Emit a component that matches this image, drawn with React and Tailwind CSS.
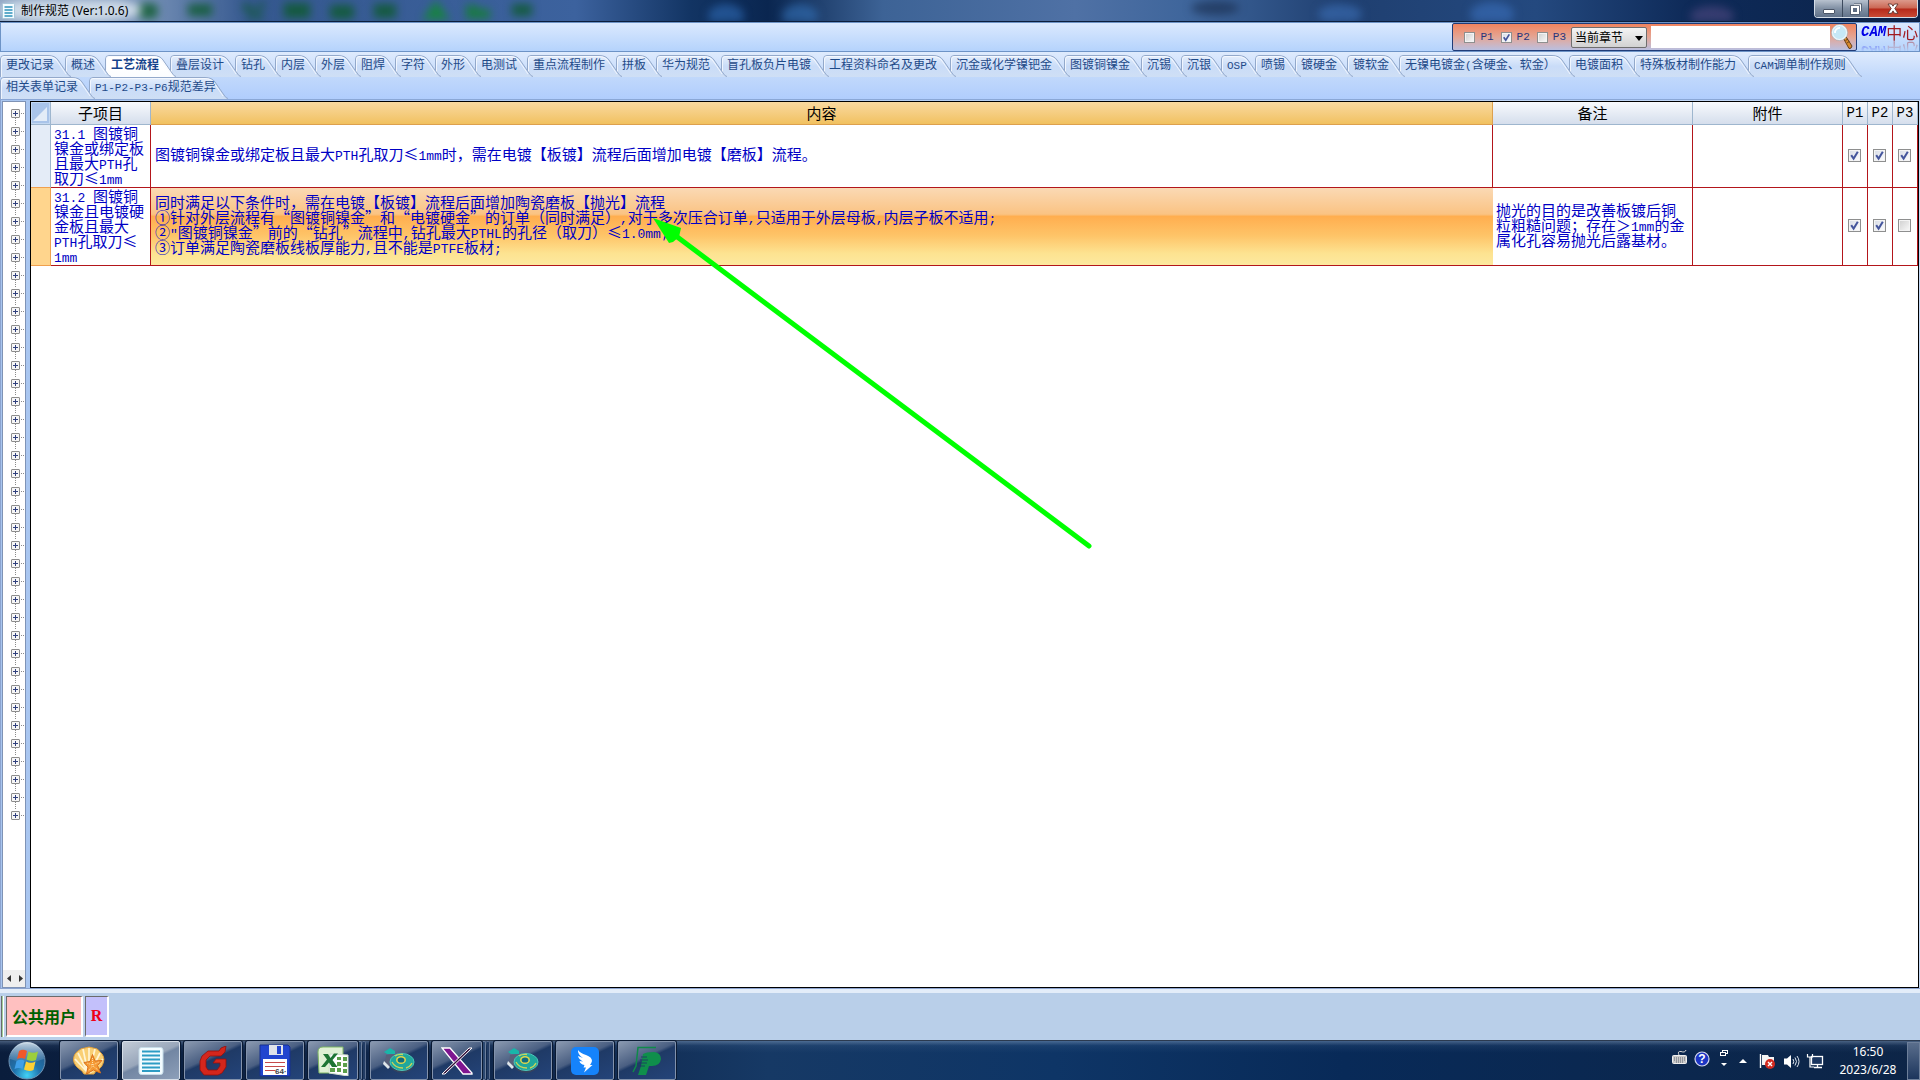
import React, { useState } from "react";

const tabRows = [
  [
    "更改记录",
    "概述",
    "工艺流程",
    "叠层设计",
    "钻孔",
    "内层",
    "外层",
    "阻焊",
    "字符",
    "外形",
    "电测试",
    "重点流程制作",
    "拼板",
    "华为规范",
    "盲孔板负片电镀",
    "工程资料命名及更改",
    "沉金或化学镍钯金",
    "图镀铜镍金",
    "沉锡",
    "沉银",
    "OSP",
    "喷锡",
    "镀硬金",
    "镀软金",
    "无镍电镀金(含硬金、软金）",
    "电镀面积",
    "特殊板材制作能力",
    "CAM调单制作规则",
  ],
  ["相关表单记录", "P1-P2-P3-P6规范差异"],
];

const rows = [
  {
    id: "31.1",
    title: ["31.1 图镀铜", "镍金或绑定板", "且最大PTH孔", "取刀≤1mm"],
    content: [
      "图镀铜镍金或绑定板且最大PTH孔取刀≤1mm时，需在电镀【板镀】流程后面增加电镀【磨板】流程。",
    ],
    remark: [],
    checks: [true, true, true],
    selected: false,
  },
  {
    id: "31.2",
    title: ["31.2 图镀铜", "镍金且电镀硬", "金板且最大", "PTH孔取刀≤", "1mm"],
    content: [
      "同时满足以下条件时，需在电镀【板镀】流程后面增加陶瓷磨板【抛光】流程",
      "①针对外层流程有“图镀铜镍金”和“电镀硬金”的订单（同时满足）,对于多次压合订单,只适用于外层母板,内层子板不适用;",
      '②"图镀铜镍金”前的“钻孔”流程中,钻孔最大PTHL的孔径（取刀）≤1.0mm;',
      "③订单满足陶瓷磨板线板厚能力,且不能是PTFE板材;",
    ],
    remark: ["抛光的目的是改善板镀后铜", "粒粗糙问题；存在＞1mm的金", "属化孔容易抛光后露基材。"],
    checks: [true, true, false],
    selected: true,
  },
];

const treeNodes = Array.from({ length: 40 }, (_, i) => i);

// Half-width characters are set in a monospaced face, the rest in the CJK face
const Mixed = ({ text, latin = "text-[13px]" }) =>
  text.split(/([\x20-\x7e]+)/).map((part, i) =>
    i % 2 === 1 ? (
      <span
        key={i}
        className={`font-['Liberation_Mono',monospace] whitespace-pre ${latin}`}
      >
        {part}
      </span>
    ) : (
      part
    )
  );

const Lines = ({ lines }) =>
  lines.map((line, i) => (
    <div key={i} className="h-[15px] whitespace-nowrap">
      <Mixed text={line} />
    </div>
  ));

const tabWidth = (label) => {
  const wide = (label.match(/[^\x20-\x7e]/g) || []).length;
  const units = wide * 2 + (label.length - wide);
  return Math.round(15 + units * 6.2);
};

const Tab = ({ label, active, order, onSelect }) => {
  const w = tabWidth(label);
  return (
    <button
      type="button"
      role="tab"
      aria-selected={active}
      onClick={onSelect}
      className={`relative h-[22px] shrink-0 pb-[4px] pl-[6px] text-left text-[12px] leading-[18px] whitespace-nowrap ${
        active ? "font-bold text-[#15428b]" : "text-[#1f4a88]"
      }`}
      style={{ width: w, zIndex: order }}
    >
      <svg
        className="absolute top-0 left-0"
        width={w + 8}
        height="22"
        aria-hidden="true"
      >
        <defs>
          <linearGradient id={`tab-${order}-${w}`} x1="0" y1="0" x2="0" y2="1">
            <stop offset="0" stopColor={active ? "#ffffff" : "#e6effc"} />
            <stop offset="0.5" stopColor={active ? "#ffffff" : "#c9dcf8"} />
            <stop offset="1" stopColor={active ? "#fbfdff" : "#cfdff5"} />
          </linearGradient>
        </defs>
        <path
          d={`M0.5 22 V4 Q0.5 0.5 4 0.5 H${w - 17} Q${w - 10} 0.5 ${w - 7} 5 L${
            w + 2
          } 18 Q${w + 4} 21.5 ${w + 6} 21.5 V22 Z`}
          fill={`url(#tab-${order}-${w})`}
        />
        <path
          d={`M0.5 22 V4 Q0.5 0.5 4 0.5 H${w - 17} Q${w - 10} 0.5 ${w - 7} 5 L${
            w + 2
          } 18 Q${w + 4} 21.5 ${w + 6} 21.5`}
          fill="none"
          stroke="#93a9cb"
        />
        <path
          d={`M1.5 22 V4 Q1.5 1.5 4 1.5 H${w - 17} Q${w - 11} 1.5 ${w - 8} 6 L${
            w + 1
          } 19`}
          fill="none"
          stroke="#f7faff"
          strokeOpacity="0.8"
        />
      </svg>
      <span className="relative">
        <Mixed text={label} latin="text-[11px]" />
      </span>
    </button>
  );
};

const CheckBox = ({ id, label, checked, onChange, size = "size-[13px]" }) => (
  <span className={`relative inline-block align-top ${size}`}>
    <input
      id={id}
      type="checkbox"
      aria-label={label}
      checked={checked}
      onChange={onChange}
      className={`block appearance-none border border-[#8e8f8f] bg-linear-to-br from-[#cfcfcf] to-[#fafafa] shadow-[inset_0_0_0_1px_#f4f4f4] checked:bg-[linear-gradient(135deg,#d5dae4,#ffffff)] ${size}`}
    />
    {checked && (
      <svg
        className={`pointer-events-none absolute inset-0 ${size}`}
        viewBox="0 0 13 13"
      >
        <path
          d="M3.2 6.2 L5.6 9.6 L9.8 2.8"
          fill="none"
          stroke="#44559c"
          strokeWidth="2"
        />
      </svg>
    )}
  </span>
);

const TitleBar = () => (
  <header className="relative flex h-[22px] items-start overflow-hidden border-b border-[#0c1e3c] bg-[linear-gradient(90deg,#8fa6c4_0%,#7d97bb_7%,#35588f_13%,#3c629e_30%,#123463_36%,#0a2650_40%,#3d6396_46%,#4f71a5_56%,#3e659b_62%,#1f3f70_70%,#24497f_80%,#0e2a58_88%,#0b234a_100%)]">
    {/* windows behind the translucent frame */}
    <div className="absolute inset-0 blur-[4px]" aria-hidden="true">
      <svg width="100%" height="22">
        <g fill="#0c5a2c" fillOpacity="0.8">
          <rect x="138" y="3" width="20" height="16" rx="6" />
          <rect x="188" y="4" width="24" height="12" />
          <path d="M246 3 l18 14 l-5 3 l-18 -13 z M262 2 l-16 18 l5 0 l15 -16z" />
          <rect x="284" y="3" width="26" height="15" />
          <rect x="330" y="5" width="24" height="14" rx="4" />
          <rect x="374" y="4" width="22" height="14" />
          <path d="M422 20 l14 -20 l14 20 z" fill="#108a30" />
          <path d="M466 5 h10 l4 4 h10 v10 h-24 z" fill="#12802f" />
          <rect x="512" y="4" width="20" height="12" />
        </g>
        <g fillOpacity="0.6">
          <ellipse cx="726" cy="16" rx="18" ry="12" fill="#2f6bb5" />
          <ellipse cx="800" cy="16" rx="18" ry="12" fill="#3472b8" />
          <ellipse cx="1215" cy="8" rx="24" ry="7" fill="#17294a" />
          <ellipse cx="1340" cy="14" rx="22" ry="10" fill="#3c70b8" />
          <ellipse cx="1492" cy="14" rx="22" ry="12" fill="#3a70bd" />
          <ellipse cx="1712" cy="16" rx="22" ry="10" fill="#524a82" />
        </g>
        <ellipse cx="70" cy="10" rx="72" ry="13" fill="#dfe8f1" fillOpacity="0.8" />
      </svg>
    </div>
    <div className="relative flex h-[21px] items-center gap-[6px] pl-[2px]">
      <svg width="13" height="16" viewBox="0 0 13 16" aria-hidden="true">
        <rect x="0.5" y="0.5" width="12" height="15" rx="1" fill="#f4fbff" stroke="#a9c6d8" />
        <path d="M2.5 4h8M2.5 7h8M2.5 10h8M2.5 13h8" stroke="#2f93bb" strokeWidth="1.4" />
      </svg>
      <h1 className="text-[12px] leading-[20px] text-black font-['Noto_Sans','Noto_Sans_CJK_SC',sans-serif]">
        制作规范 (Ver:1.0.6)
      </h1>
    </div>
    <div className="relative mr-[2px] ml-auto flex h-[18px] overflow-hidden rounded-b-[4px] border border-t-0 border-[#d4dde8]">
      <button
        type="button"
        aria-label="最小化"
        className="flex w-[28px] items-center justify-center border-r border-[#3c4a5e] bg-linear-to-b from-[#b8c2cf] via-[#8190a4] via-50% to-[#62738b]"
      >
        <svg width="12" height="14" viewBox="0 0 12 14">
          <rect x="0.5" y="7.5" width="11" height="4" rx="0.5" fill="#fff" stroke="#4b5668" />
        </svg>
      </button>
      <button
        type="button"
        aria-label="还原"
        className="flex w-[26px] items-center justify-center border-r border-[#3c4a5e] bg-linear-to-b from-[#b8c2cf] via-[#8190a4] via-50% to-[#62738b]"
      >
        <svg width="14" height="14" viewBox="0 0 14 14">
          <path d="M5 3.2h6.2v6" fill="none" stroke="#4b5668" strokeWidth="3.4" />
          <path d="M5 3.2h6.2v6" fill="none" stroke="#fff" strokeWidth="1.7" />
          <rect x="3" y="5" width="6" height="6" fill="#8190a4" stroke="#4b5668" strokeWidth="3.6" />
          <rect x="3" y="5" width="6" height="6" fill="#5d6c82" stroke="#fff" strokeWidth="2" />
        </svg>
      </button>
      <button
        type="button"
        aria-label="关闭"
        className="flex w-[48px] items-center justify-center bg-[linear-gradient(180deg,#dc9a8c_0%,#cb6653_48%,#b5291a_52%,#c94a35_100%)]"
      >
        <svg width="14" height="12" viewBox="0 0 14 12">
          <path
            d="M2 1h3.5L7 3.2 8.500 1h3.500L8.800 5.500l3.200 4.800H8.500L7 7.900l-1.500 2.400H2l3.200-4.800z"
            fill="#fff"
            stroke="#5d3530"
            strokeWidth="0.9"
          />
        </svg>
      </button>
    </div>
  </header>
);

const SearchBar = () => {
  const [parts, setParts] = useState({ P1: false, P2: true, P3: false });

  return (
    <div className="flex h-[30px] items-stretch border border-[#6d93c6] bg-linear-to-b from-[#dbe9fe] to-[#b5d3fc]">
      <form
        className="ml-auto flex items-center rounded-[2px] border border-[#1f3c78] bg-linear-to-b from-[#f0835d] via-[#e4a594] to-[#b9bfe0] pr-[3px] pl-[11px]"
        onSubmit={(e) => e.preventDefault()}
      >
        {Object.keys(parts).map((name) => (
          <div key={name} className="mr-[7px] flex items-center gap-[5px]">
            <CheckBox
              id={`part-${name}`}
              size="size-[11px]"
              checked={parts[name]}
              onChange={() => setParts({ ...parts, [name]: !parts[name] })}
            />
            <label
              htmlFor={`part-${name}`}
              className="text-[11px] leading-[14px] text-[#27357c] font-['Liberation_Mono',monospace]"
            >
              {name}
            </label>
          </div>
        ))}
        <div className="relative ml-[-2px]">
          <select
            aria-label="范围"
            className="block h-[21px] w-[76px] appearance-none rounded-[2px] border border-[#6f6f6f] bg-linear-to-b from-[#f4f4f4] to-[#d2d2d2] pl-[3px] text-[12px] leading-[18px] text-black"
          >
            <option>当前章节</option>
            <option>全部章节</option>
          </select>
          <svg
            className="pointer-events-none absolute top-[9px] right-[4px]"
            width="8"
            height="5"
          >
            <path d="M0 0h8L4 5z" fill="#000" />
          </svg>
        </div>
        <input
          type="text"
          aria-label="搜索"
          className="ml-[4px] h-[22px] w-[179px] bg-white px-1 text-[12px] outline-none"
        />
        <button type="submit" aria-label="查找" className="ml-[1px]">
          <svg width="22" height="26" viewBox="0 0 22 26">
            <path d="M12.500 14.500 L15 12.800 L21 22 Q20.500 25 18 24.500 Z" fill="#d88a2e" stroke="#5b3513" strokeWidth="0.900" />
            <path d="M14.500 16.500l2.500-1.500M16 19l2.500-1.700" stroke="#5b3513" strokeWidth="0.800" />
            <circle cx="8.500" cy="8.500" r="7.300" fill="#c6e8f6" stroke="#eef6fa" strokeWidth="1.600" />
            <circle cx="8.500" cy="8.500" r="8.100" fill="none" stroke="#8ea3ad" strokeWidth="0.500" />
            <path d="M4 9a4.500 4.500 0 0 1 5-5" fill="none" stroke="#fff" strokeWidth="1.800" />
          </svg>
        </button>
      </form>
      <div className="w-[62px] pl-[4px] text-[16px] leading-[18px] whitespace-nowrap">
        <div className="flex h-[18px] items-center [-webkit-box-reflect:below_0_linear-gradient(transparent_40%,rgba(0,0,0,0.45))]">
          <span className="text-[14px] font-bold text-[#0000e6] italic font-['Liberation_Mono',monospace]">
            CAM
          </span>
          <span className="text-[#a01a20]">中心</span>
        </div>
      </div>
    </div>
  );
};

const Tree = () => (
  <aside className="mr-[4px] flex w-[24px] shrink-0 flex-col border border-[#7f93b5] bg-white">
    <ul className="flex-1 pt-[2px]">
      {treeNodes.map((n) => (
        <li key={n} className="h-[18px] pl-[7px]">
          <button type="button" aria-label={`展开 ${n + 1}`} className="block">
            <svg width="14" height="18" viewBox="0 0 14 18">
              <path
                d={
                  n === 0
                    ? "M5.500 14V18"
                    : n === treeNodes.length - 1
                    ? "M5.500 0V4"
                    : "M5.500 0V4M5.500 14V18"
                }
                stroke="#8a8a8a"
                strokeDasharray="1 1"
              />
              <path d="M11 9.500H14" stroke="#8a8a8a" strokeDasharray="1 1" />
              <rect x="1.500" y="5.500" width="8" height="8" rx="0.500" fill="#f6f6f6" stroke="#8c8c8c" />
              <path d="M3 9.500H8M5.500 7V12" stroke="#2f3f7d" />
            </svg>
          </button>
        </li>
      ))}
    </ul>
    <div className="flex h-[17px] items-center justify-between bg-[#efefef] pr-[2px] pl-[4px]">
      <button type="button" aria-label="向左">
        <svg width="4" height="7" className="block">
          <path d="M4 0v7L0 3.500z" fill="#333" />
        </svg>
      </button>
      <button type="button" aria-label="向右">
        <svg width="4" height="7" className="block">
          <path d="M0 0v7L4 3.500z" fill="#333" />
        </svg>
      </button>
    </div>
  </aside>
);

const headCell =
  "h-[23px] border-r border-b border-[#9eb6ce] bg-linear-to-b from-[#f8fafd] to-[#d5deec] p-0 pb-[2px] text-center font-normal";
const bodyCell = "border-r border-b border-[#b3161b] pt-0 pr-0";

const SpecTable = () => {
  const [checks, setChecks] = useState(rows.map((r) => r.checks));

  const toggle = (row, col) =>
    setChecks(
      checks.map((list, i) =>
        i === row ? list.map((v, j) => (j === col ? !v : v)) : list
      )
    );

  return (
    <main className="relative mr-[1px] min-w-0 flex-1 border border-black bg-white">
      <table className="w-full table-fixed border-separate border-spacing-0 text-[15px] leading-[15px]">
        <colgroup>
          <col className="w-[20px]" />
          <col className="w-[100px]" />
          <col />
          <col className="w-[200px]" />
          <col className="w-[150px]" />
          <col className="w-[25px]" />
          <col className="w-[25px]" />
          <col className="w-[25px]" />
        </colgroup>
        <thead>
          <tr>
            <th className="border-r border-b border-[#9eb6ce] bg-[#a9c4e9] p-0">
              <svg width="19" height="22" viewBox="0 0 19 22" className="block">
                <rect x="0.500" y="0.500" width="18" height="21" fill="none" stroke="#c3d8f2" />
                <path d="M16 5V19H2Z" fill="#e3ecf7" />
              </svg>
            </th>
            <th className={headCell}>子项目</th>
            <th className="border-r border-b border-[#dda04e] bg-linear-to-b from-[#f9d99f] to-[#f1c15f] p-0 pb-[2px] text-center font-normal">
              内容
            </th>
            <th className={headCell}>备注</th>
            <th className={headCell}>附件</th>
            {["P1", "P2", "P3"].map((p) => (
              <th key={p} className={headCell}>
                <Mixed text={p} latin="text-[14px]" />
              </th>
            ))}
          </tr>
        </thead>
        <tbody className="text-[#0000c4]">
          {rows.map((row, i) => (
            <tr key={row.id}>
              <td
                className={
                  row.selected
                    ? "border-r border-b border-[#f0a04e] bg-[#ffd58d]"
                    : "border-r border-b border-r-[#9eb6ce] border-b-[#f0a04e] bg-[#e4ecf7]"
                }
              />
              <td className={`${bodyCell} pb-[2px] pl-[3px]`}>
                <Lines lines={row.title} />
              </td>
              <td
                className={
                  row.selected
                    ? "border-b border-[#b3161b] bg-[linear-gradient(180deg,#fad9b4_0%,#fac383_34%,#ffae4f_37%,#fec468_62%,#fde391_85%,#fde99f_100%)] pt-0 pb-[5px] pl-[4px]"
                    : `${bodyCell} pb-[5px] pl-[4px]`
                }
              >
                <Lines lines={row.content} />
              </td>
              <td className={`${bodyCell} pb-[5px] pl-[3px]`}>
                <Lines lines={row.remark} />
              </td>
              <td className={bodyCell} />
              {checks[i].map((checked, j) => (
                <td key={j} className={`${bodyCell} pr-[1px] pl-0 text-center`}>
                  <CheckBox
                    id={`check-${row.id}-${j}`}
                    label={`${row.id} P${j + 1}`}
                    checked={checked}
                    onChange={() => toggle(i, j)}
                  />
                </td>
              ))}
            </tr>
          ))}
        </tbody>
      </table>

      {/* annotation arrow lying over the grid */}
      <svg
        className="pointer-events-none absolute top-[106px] left-[613px]"
        width="460"
        height="350"
        aria-hidden="true"
      >
        <path d="M24 22 L445 338" stroke="#00ff00" strokeWidth="5" strokeLinecap="round" />
        <path d="M9 10 L37 20 L35 29 L29 34 L25 35 Z" fill="#00ff00" />
      </svg>
    </main>
  );
};

const StatusBar = () => (
  <footer className="flex h-[47px] gap-[2px] bg-[#b9cfe9] pt-[3px] pl-[1px] text-[16px] font-bold">
    <div className="h-[41px] w-[3px] border-r border-l border-r-white border-l-[#6b6b6b] bg-[#9fd09f]" />
    <div className="flex h-[41px] w-[77px] items-center justify-center border-t border-r-2 border-b-2 border-l border-t-[#6b6b6b] border-r-white border-b-white border-l-[#6b6b6b] bg-[#ffc0c0] text-[#006000]">
      公共用户
    </div>
    <div className="flex h-[41px] w-[24px] items-center justify-center border-t border-r-2 border-b-2 border-l border-t-[#6b6b6b] border-r-white border-b-white border-l-[#6b6b6b] bg-[#c3c0fb] text-[#f00018] font-['Liberation_Serif',serif]">
      R
    </div>
  </footer>
);

const ShellIcon = () => (
  <svg width="34" height="30" viewBox="0 0 34 30">
    <path
      d="M10 25 Q2 20 1.500 14 Q1.500 8 6 5 Q9 2 13 2 Q17 0 21 2 Q26 2 28 6 Q33 10 31.500 16 Q30 22 24 25 L22 28 H12 Z"
      fill="#f9cf74"
      stroke="#e0a03c"
    />
    <path
      d="M16 27 L3 13M16 27 L6 7M16 27 L11 3M17 27 L17 2M17 27 L23 3M18 27 L28 7M18 27 L31 13"
      stroke="#fff4d4"
      strokeWidth="1.700"
    />
    <path
      d="M20.500 8.500 L23 15 L30 14.500 L25.500 19.500 L28.500 27 L21.500 24 L14.500 28 L16 21 L12 16.500 L18 15.500 Z"
      fill="#f59a35"
      stroke="#d9701a"
    />
    <path d="M20.500 12v7M20.500 20l-4 5M21 20l5 4M21 19l6-3M20 19l-5-2" stroke="#ffe0a8" strokeDasharray="1 1" />
  </svg>
);

const NoteIcon = () => (
  <svg width="26" height="28" viewBox="0 0 26 28">
    <rect x="1" y="0.500" width="24" height="27" rx="2.500" fill="#f2fbff" stroke="#c4dbe8" />
    <path d="M4 4.500h18M4 8.500h18M4 12.500h18M4 16.500h18M4 20.500h18M4 24h18" stroke="#2d9cc4" strokeWidth="2" />
  </svg>
);

const GIcon = () => (
  <svg width="28" height="30" viewBox="0 0 28 30">
    <path
      d="M3 10 L9 5 H20 L22 2 L27 0 L26 6 L22 10 H11 L7 14 V21 L9 24 H18 L21 20 V17 H14 L17 13 H27 V21 L23 27 L19 29 H5 L1 24 V15 Z"
      fill="#d4261c"
      stroke="#94100c"
      strokeWidth="0.800"
    />
  </svg>
);

const FloppyIcon = () => (
  <svg width="32" height="33" viewBox="0 0 32 33">
    <path d="M1 1H29L31 3V32H1Z" fill="#2245cf" stroke="#16308f" />
    <rect x="10" y="1" width="14" height="10" fill="#dfe3ea" />
    <rect x="18" y="2" width="4" height="8" fill="#2245cf" />
    <rect x="4" y="15" width="24" height="16" fill="#fff" />
    <path d="M6 18.500h20M6 22.500h20M6 26.500h10" stroke="#c44a4a" strokeWidth="1.200" />
    <text x="16" y="30" fontSize="8" fontWeight="bold" fill="#444" fontFamily="Liberation Sans">
      64·
    </text>
  </svg>
);

const ExcelIcon = () => (
  <svg width="32" height="30" viewBox="0 0 32 30">
    <path d="M1 6 Q1 1 6 1 H26 V27 H2 Z" fill="#dff0d4" stroke="#7fb765" />
    <path d="M13 8 L31 9 V30 L12 27 Z" fill="#fff" stroke="#cfdccc" />
    <path d="M20 11h4v3h-4zM26 11h4v4h-4zM20 16h4v4h-4zM26 17h4v4h-4zM13 22h5v4h-5zM20 22h4v4h-4zM26 23h4v4h-4z" fill="#5b9f4a" />
    <path d="M6 8h5l2.500 4L17 7.500h4L15.500 14l5 7H15l-3-4.500L8 21H4l6-7.500z" fill="#1e7434" />
  </svg>
);

const DiscIcon = () => (
  <svg width="32" height="26" viewBox="0 0 32 26">
    <path d="M1 4 L7 0 L12 3 V6 L4 6 Z" fill="#19b5a9" />
    <path d="M3 7 L13 6 L16 9 L9 14 L6 19 L2 14 Z" fill="#59607a" />
    <path d="M1 13 L7 19 L5 21 L0 16Z" fill="#dfe6ea" />
    <ellipse cx="19" cy="16" rx="12" ry="9" fill="#35435e" />
    <ellipse cx="19" cy="14" rx="12" ry="8.500" fill="#20a79c" stroke="#4cc5b8" />
    <path d="M9 14 Q12 20 20 20M12 8 Q15 6 20 6.500M29 15 Q27 19 23 20" fill="none" stroke="#c9d458" strokeWidth="1.300" />
    <ellipse cx="18" cy="12" rx="5" ry="4" fill="#dfd64a" />
    <ellipse cx="18" cy="12" rx="3.400" ry="2.600" fill="#106c80" />
  </svg>
);

const XIcon = () => (
  <svg width="32" height="28" viewBox="0 0 32 28">
    <path d="M1 1H9L31 26V27H22Z" fill="#7e1590" stroke="#fff" strokeWidth="1.300" />
    <path d="M31 1H28L1 27H4Z" fill="#321038" stroke="#fff" strokeWidth="1" />
  </svg>
);

const BirdIcon = () => (
  <svg width="28" height="28" viewBox="0 0 28 28">
    <rect width="28" height="28" rx="5" fill="#1583fb" />
    <path
      d="M7 3 Q9 6 15 8 Q21 10 21 14 Q20.500 16 19 18 H21.500 L13 25.500 L15 20.500 H12.500 L13.500 18 Q9 17 8.500 14 L12 14.500 Q7.500 12 7 9 L12 11 Q6.500 7.500 7 3Z"
      fill="#fff"
    />
  </svg>
);

const PIcon = () => (
  <svg width="30" height="30" viewBox="0 0 30 30">
    <path d="M24 1.500H6L4 20 1 26" fill="none" stroke="#0f8a4a" strokeWidth="1.500" />
    <path d="M11 8 Q14 6 22 6Q29 7 29 13Q28 20 20 20H17L14 29H6L9 20 Z" fill="#0f8f4b" />
    <path d="M9 11h6M8 14h8M7 17h8M6 20h7" stroke="#1c3f60" strokeWidth="0.900" />
  </svg>
);

const taskItems = [
  { name: "贝壳", icon: ShellIcon },
  { name: "制作规范", icon: NoteIcon, active: true },
  { name: "Genesis", icon: GIcon },
  { name: "软盘", icon: FloppyIcon },
  { name: "表格", icon: ExcelIcon, stacked: true },
  { name: "光盘", icon: DiscIcon },
  { name: "终端", icon: XIcon, stacked: true },
  { name: "光盘 2", icon: DiscIcon },
  { name: "消息", icon: BirdIcon },
  { name: "P", icon: PIcon },
];

const TaskButton = ({ name, icon: Icon, active, stacked }) => (
  <div className="flex h-[39px] w-[58px]">
    <button
      type="button"
      aria-label={name}
      className={`flex min-w-0 flex-1 items-center justify-center rounded-[2px] border shadow-[0_0_0_1px_#0a1a33] ${
        active
          ? "border-[#d6dee8] bg-[linear-gradient(155deg,#c3ccd8_0%,#98a6ba_45%,#7286a3_50%,#8d9fb9_100%)]"
          : "border-[#8292ac] bg-[linear-gradient(155deg,#8a99b0_0%,#4a5f82_42%,#1f3a66_48%,#24447a_100%)]"
      }`}
    >
      <Icon />
    </button>
    {stacked && (
      <>
        <span className="ml-[1px] w-[3px] rounded-r-[2px] border border-l-0 border-[#6d7f9c] bg-[#2b4870]" />
        <span className="ml-[1px] w-[3px] rounded-r-[2px] border border-l-0 border-[#5d7090] bg-[#223c64]" />
      </>
    )}
  </div>
);

const StartOrb = () => (
  <button type="button" aria-label="开始" className="mr-[13px] ml-[7px]">
    <svg width="40" height="40" viewBox="0 0 40 40" className="block">
      <defs>
        <radialGradient id="orb" cx="0.5" cy="0.9" r="0.9">
          <stop offset="0" stopColor="#42d2f5" />
          <stop offset="0.4" stopColor="#1f74ae" />
          <stop offset="1" stopColor="#27507e" />
        </radialGradient>
        <linearGradient id="gloss" x1="0" y1="0" x2="0" y2="1">
          <stop offset="0" stopColor="#e6f1f8" stopOpacity="0.85" />
          <stop offset="1" stopColor="#9cc0da" stopOpacity="0.15" />
        </linearGradient>
      </defs>
      <circle cx="20" cy="20" r="18" fill="url(#orb)" stroke="#6f93b4" />
      <path d="M3 18A17 17 0 0 1 37 18Q20 25 3 18Z" fill="url(#gloss)" />
      <path d="M12 10Q16 7.500 20 10L18 18Q14 16 10 18Z" fill="#f0592a" />
      <path d="M21.500 10.500Q26 13 31 10.500L29 19Q24 21 19.500 18.500Z" fill="#9ccf3c" />
      <path d="M9.500 20Q14 17.500 17.500 19.700L15.500 28Q12 26 7.500 28Z" fill="#3f9fe8" />
      <path d="M19 20.500Q24 23 28.500 20.500L26.500 29Q22 31 17 28.500Z" fill="#fcd035" />
    </svg>
  </button>
);

const Tray = () => (
  <div className="ml-auto flex h-[40px] items-center text-white">
    <svg width="155" height="40" viewBox="0 0 155 40" aria-hidden="true">
      {/* keyboard */}
      <path d="M8 14 Q6 10 10 10.500 Q14 12 15 9" fill="none" stroke="#d6d6d6" />
      <rect x="1.500" y="14.500" width="14" height="8" rx="1" fill="#c9c9c9" stroke="#efefef" />
      <path d="M3 17h11M3 19h11M5 21h7" stroke="#5b6270" strokeDasharray="1 1" />
      {/* help */}
      <circle cx="31" cy="18" r="7" fill="#1c35c4" stroke="#d5d9ee" strokeWidth="1.200" />
      <text x="31" y="22" fontSize="12" fontWeight="bold" textAnchor="middle" fill="#fff" fontFamily="Liberation Sans">
        ?
      </text>
      {/* restore and menu carets */}
      <rect x="51.500" y="9.500" width="5" height="3" fill="none" stroke="#fff" />
      <rect x="49.500" y="11.500" width="5" height="3" fill="#14294b" stroke="#fff" />
      <path d="M50 22h6l-3 3z" fill="#fff" />
      <path d="M68 22h8l-4-4z" fill="#fff" />
      {/* action centre flag */}
      <path d="M89.500 13v14" stroke="#fff" strokeWidth="1.400" />
      <path d="M91 14h6l1 2h5v8H91z" fill="#f4f4f4" />
      <circle cx="99" cy="23" r="5" fill="#d22a20" />
      <path d="M97 21l4 4M101 21l-4 4" stroke="#fff" strokeWidth="1.400" />
      {/* volume */}
      <path d="M113 17.500h3l4-3.500v13l-4-3.500h-3z" fill="#fff" />
      <path d="M122 18q1.500 2.500 0 5M124 16.500q3 4 0 8M126 15q4 5.500 0 11" fill="none" stroke="#dfe6ef" />
      {/* network */}
      <rect x="140.500" y="15.500" width="11" height="8" fill="#1b365f" stroke="#fff" strokeWidth="1.300" />
      <path d="M143 26.500h8M146.500 24v3" stroke="#fff" strokeWidth="1.300" />
      <path d="M136.500 13v3h5v-3M139 16v10h4" fill="none" stroke="#fff" strokeWidth="1.200" />
    </svg>
    <div className="ml-[5px] w-[74px] text-center text-[12px] leading-[18px] font-['Noto_Sans',sans-serif]">
      <div>16:50</div>
      <div>2023/6/28</div>
    </div>
    <button
      type="button"
      aria-label="显示桌面"
      className="ml-[2px] h-[38px] w-[13px] border border-[#6d7f9a] bg-linear-to-b from-[#5a6e8c] to-[#1c355c]"
    />
  </div>
);

const TaskBar = () => (
  <nav
    aria-label="任务栏"
    className="flex h-[40px] items-center border-t border-[#2b3a50] bg-[linear-gradient(180deg,rgba(160,185,215,0.4)_0%,rgba(90,120,160,0.15)_12%,rgba(0,0,0,0)_30%),linear-gradient(90deg,#0a1d3c_0%,#10294f_30%,#163965_40%,#0e3566_55%,#082a58_70%,#0d2547_100%)]"
  >
    <StartOrb />
    <div className="flex gap-[4px]">
      {taskItems.map((item) => (
        <TaskButton key={item.name} {...item} />
      ))}
    </div>
    <Tray />
  </nav>
);

const App = () => {
  const [activeTab, setActiveTab] = useState("工艺流程");

  return (
    <div className="flex min-h-screen flex-col bg-[#b5d0fb] font-['Noto_Sans_CJK_SC',sans-serif]">
      <TitleBar />
      <SearchBar />
      <div
        role="tablist"
        className="isolate flex h-[48px] flex-col border-b border-[#8aa7d6] bg-linear-to-b from-[#dfebfd] via-[#c2d9fb] to-[#b0cdfd] pt-[3px]"
      >
        {tabRows.map((labels, r) => (
          <div key={r} className="flex">
            {labels.map((label, i) => (
              <Tab
                key={label}
                label={label}
                active={label === activeTab}
                order={labels.length - i}
                onSelect={() => setActiveTab(label)}
              />
            ))}
          </div>
        ))}
      </div>
      <div className="flex flex-1 border-b border-l border-[#8ba3cf] bg-linear-to-r from-[#a9c6f0] to-[#c3d8f5] pt-[1px] pl-[1px]">
        <Tree />
        <SpecTable />
      </div>
      <div className="h-[4px] bg-[#e3edf9]" />
      <StatusBar />
      <TaskBar />
    </div>
  );
};

export default App;
